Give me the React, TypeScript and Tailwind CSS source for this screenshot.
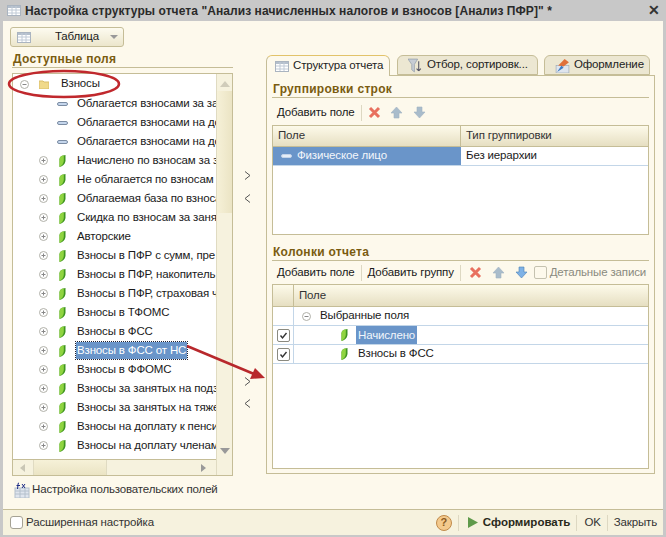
import type { ReactNode } from "react";

const FIELDS: [string, "dash" | "leaf"][] = [
  ["Облагается взносами за за", "dash"],
  ["Облагается взносами на до", "dash"],
  ["Облагается взносами на до", "dash"],
  ["Начислено по взносам за з", "leaf"],
  ["Не облагается по взносам", "leaf"],
  ["Облагаемая база по взносам", "leaf"],
  ["Скидка по взносам за заня", "leaf"],
  ["Авторские", "leaf"],
  ["Взносы в ПФР с сумм, пре", "leaf"],
  ["Взносы в ПФР, накопитель", "leaf"],
  ["Взносы в ПФР, страховая ч", "leaf"],
  ["Взносы в ТФОМС", "leaf"],
  ["Взносы в ФСС", "leaf"],
  ["Взносы в ФСС от НС", "leaf"],
  ["Взносы в ФФОМС", "leaf"],
  ["Взносы за занятых на подз", "leaf"],
  ["Взносы за занятых на тяже", "leaf"],
  ["Взносы на доплату к пенси", "leaf"],
  ["Взносы на доплату членам", "leaf"],
  ["Взносы в ПФР", "leaf"],
];

function Leaf() {
  return (
    <svg width="7" height="12" viewBox="0 0 8 14" className="shrink-0">
      <path d="M3.5 1L7.5 0V7C7 11 4 13 0.5 14V5C0.5 3 2 1.5 3.5 1Z" fill="#3f9420" />
      <path d="M3.5 1L5.5 0.5V7C5 10.5 3 12.5 0.5 14V5C0.5 3 2 1.5 3.5 1Z" fill="#8fd440" />
    </svg>
  );
}

function Dash({ light }: { light?: boolean }) {
  return <span className={`h-[4px] w-[11px] shrink-0 rounded-sm border ${light ? "border-[#c4d4ea] bg-[#e6eef8]" : "border-[#7b8ca3] bg-[#c5d6ec]"}`} />;
}

function Circle({ minus }: { minus?: boolean }) {
  return (
    <svg width="9" height="9" viewBox="0 0 9 9" className="shrink-0">
      <circle cx="4.5" cy="4.5" r="4" fill="#fff" stroke="#b0b0a8" />
      <path d={minus ? "M2.5 4.5H6.5" : "M2.5 4.5H6.5M4.5 2.5V6.5"} stroke="#888" />
    </svg>
  );
}

function Cross() {
  return (
    <svg width="13" height="13" viewBox="0 0 13 13" className="shrink-0">
      <path d="M2 2L11 11M11 2L2 11" stroke="#e8705f" strokeWidth="3" />
    </svg>
  );
}

function UpDown({ down, active }: { down?: boolean; active?: boolean }) {
  return (
    <svg width="13" height="13" viewBox="0 0 13 13" className="shrink-0">
      <path
        d={down ? "M4 1H9V6H12L6.5 12L1 6H4Z" : "M4 12H9V7H12L6.5 1L1 7H4Z"}
        fill={active ? "#7fb2e6" : "#a9bccb"}
        stroke={active ? "#4c7fb5" : "#a3b4c2"}
        strokeWidth="0.6"
      />
    </svg>
  );
}

function TableIcon() {
  return (
    <svg width="14" height="11" viewBox="0 0 14 11" className="shrink-0">
      <rect x="0.5" y="0.5" width="13" height="10" fill="#fff" stroke="#aab4c0" />
      <rect x="1" y="1" width="12" height="2" fill="#b4bfcc" />
      <path d="M5 1V10M9 1V10M1 5H13M1 8H13" stroke="#c0cad6" />
    </svg>
  );
}

function SectionTitle({ children }: { children: ReactNode }) {
  return <div className="border-b border-[#c5bd97] pl-px text-[12px] leading-[15px] font-bold tracking-[0.3px] text-[#7a5c10]">{children}</div>;
}

function Sep() {
  return <span className="block h-[16px] w-px bg-[#ddd8c2]" />;
}

function Check() {
  return (
    <span className="flex h-[13px] w-[13px] items-center justify-center rounded-[2px] border border-[#8a8a80] bg-white">
      <svg width="9" height="9" viewBox="0 0 9 9">
        <path d="M1.5 4.5L3.5 7L7.5 2" fill="none" stroke="#333" strokeWidth="1.4" />
      </svg>
    </span>
  );
}

function Tab({ label, active, icon, width }: { label: string; active?: boolean; icon: ReactNode; width: string }) {
  return (
    <div className={`flex items-center gap-[4px] rounded-t-md border border-[#c5bd97] ${width} ${active ? "relative z-10 h-[21px] border-b-0 border-t-[#e2c36a] bg-[#fdf9ec]" : "h-[20px] bg-[#ece7d2]"}`}>
      {icon}
      <span className="whitespace-nowrap text-[#222]">{label}</span>
    </div>
  );
}

function HeaderCell({ children, className }: { children?: ReactNode; className?: string }) {
  return <div className={`flex items-center border-b border-[#c5bd97] bg-gradient-to-b from-[#fdfaea] to-[#e6dfc2] px-[5px] text-[#333] ${className ?? "h-[21px]"}`}>{children}</div>;
}

export default function App() {
  return (
    <div className="relative h-[537px] w-[666px] overflow-hidden bg-[#c8c8c8] font-['Liberation_Sans',sans-serif] text-[11.5px] tracking-[-0.15px] text-[#1a1a1a]">
      {/* заголовок */}
      <div className="flex h-[21px] items-center pr-[6px] pl-[7px]">
        <TableIcon />
        <span className="ml-[4px] text-[12px] font-bold tracking-[0.08px] whitespace-nowrap text-[#2a2a2a]">
          Настройка структуры отчета "Анализ начисленных налогов и взносов [Анализ ПФР]" *
        </span>
        <span className="ml-auto text-[14px] font-bold text-[#333]">✕</span>
      </div>

      <div className="mx-[3px] flex h-[514px] flex-col bg-[#fdf9ec]">
        <div className="flex flex-1">
          {/* левая колонка */}
          <div className="flex w-[230px] shrink-0 flex-col pt-[6px] pl-[9px]">
            <div className="-ml-[2px] flex h-[20px] w-[114px] items-center rounded-[3px] border border-[#c5bd97] bg-gradient-to-b from-[#fdfbf0] to-[#ece6cc] pl-[6px]">
              <TableIcon />
              <span className="ml-[24px]">Таблица</span>
              <span className="mr-[5px] ml-auto h-0 w-0 border-x-[4px] border-t-[4px] border-x-transparent border-t-[#999]" />
            </div>
            <div className="mt-[5px]">
              <SectionTitle>Доступные поля</SectionTitle>
            </div>
            <div className="mt-[5px] flex h-[403px] border border-[#c5bd97] bg-white">
              <div className="flex min-w-0 flex-1 flex-col">
                <div className="h-[386px] overflow-hidden">
                  <div className="flex h-[20px] items-center pl-[7px]">
                    <Circle minus />
                    <svg width="10" height="9" viewBox="0 0 10 9" className="ml-[10px] shrink-0">
                      <path d="M0 1H4L5 2H10V9H0Z" fill="#f0d98a" stroke="#d9be6a" />
                    </svg>
                    <span className="ml-[12px]">Взносы</span>
                  </div>
                  {FIELDS.map(([name, kind], i) => (
                    <div key={i} className="flex h-[19px] items-center">
                      <span className="flex w-[35px] shrink-0 justify-end">{kind === "leaf" ? <Circle /> : null}</span>
                      <span className="flex w-[28px] shrink-0 justify-center">{kind === "leaf" ? <Leaf /> : <Dash />}</span>
                      <span className={`px-[1px] leading-[17px] whitespace-nowrap ${name === "Взносы в ФСС от НС" ? "bg-[#6a95c9] text-white outline-1 outline-[#223] outline-dotted" : ""}`}>{name}</span>
                    </div>
                  ))}
                </div>
                {/* горизонтальная прокрутка */}
                <div className="flex h-[16px] items-center border-t border-[#c5bd97] bg-[#f6f2de]">
                  <span className="ml-[7px] h-0 w-0 border-y-[4px] border-r-[5px] border-y-transparent border-r-[#c9c6b5]" />
                  <span className="ml-[8px] h-full w-[74px] border-x border-[#e0dbc2] bg-gradient-to-b from-[#f6f1d8] to-[#ebe4c4]" />
                  <span className="mr-[10px] ml-auto h-0 w-0 border-y-[4px] border-l-[5px] border-y-transparent border-l-[#999]" />
                </div>
              </div>
              {/* вертикальная прокрутка */}
              <div className="flex w-[16px] shrink-0 flex-col items-center border-l border-[#e0dbc2] bg-[#f6f2de]">
                <span className="mt-[7px] h-0 w-0 border-x-[5px] border-b-[6px] border-x-transparent border-b-[#d0ccba]" />
                <span className="mt-[4px] h-[122px] w-full bg-gradient-to-r from-[#f6f1d8] to-[#ebe4c4]" />
                <span className="mt-[235px] h-0 w-0 border-x-[5px] border-t-[6px] border-x-transparent border-t-[#999]" />
              </div>
            </div>
            <div className="mt-[5px] -ml-px flex items-center gap-[2px] pl-[3px]">
              <svg width="16" height="16" viewBox="0 0 16 16" className="shrink-0">
                <rect x="1" y="6" width="14" height="10" fill="#dfe5ee" stroke="#b4c0cc" />
                <path d="M1 9H15M1 12H15M6 6V16M11 6V16" stroke="#b4c0cc" />
                <path d="M5 1Q3.5 1 4 3L3.5 7M2.5 3.5H6M8 2L11 6M11 2L8 6" fill="none" stroke="#1b2a86" strokeWidth="1" />
              </svg>
              <span className="text-[#333]">Настройка пользовательских полей</span>
            </div>
          </div>

          {/* кнопки переноса */}
          <div className="flex w-[33px] shrink-0 flex-col items-center pt-[150px] pr-[4px]">
            <svg width="7" height="9" viewBox="0 0 7 9"><path d="M1 0.5L6 4.5L1 8.5" fill="none" stroke="#555" /></svg>
            <svg width="7" height="9" viewBox="0 0 7 9" className="mt-[14px]"><path d="M6 0.5L1 4.5L6 8.5" fill="none" stroke="#555" /></svg>
            <svg width="7" height="9" viewBox="0 0 7 9" className="mt-[174px]"><path d="M1 0.5L6 4.5L1 8.5" fill="none" stroke="#555" /></svg>
            <svg width="7" height="9" viewBox="0 0 7 9" className="mt-[13px]"><path d="M6 0.5L1 4.5L6 8.5" fill="none" stroke="#555" /></svg>
          </div>

          {/* правая колонка */}
          <div className="flex flex-1 flex-col pt-[34px] pr-[8px]">
            <div className="flex">
              <Tab active width="w-[124px] pl-[8px]" label="Структура отчета" icon={<TableIcon />} />
              <div className="w-[7px]" />
              <Tab
                width="w-[141px] pl-[10px]"
                label="Отбор, сортировк..."
                icon={
                  <svg width="15" height="15" viewBox="0 0 14 14" className="shrink-0">
                    <path d="M0 1H9L6 6V13L3.5 11V6Z" fill="#c6ccd4" stroke="#8a96a5" strokeWidth="0.6" />
                    <path d="M10 3V12M10 12L8 10M10 12L12 10" stroke="#556" fill="none" />
                  </svg>
                }
              />
              <div className="w-[6px]" />
              <Tab
                width="w-[106px] pl-[10px]"
                label="Оформление"
                icon={
                  <svg width="15" height="15" viewBox="0 0 14 14" className="shrink-0">
                    <rect x="1" y="7" width="12" height="7" fill="#dfe5ee" stroke="#9aa7b5" strokeWidth="0.6" />
                    <path d="M3 7L9 1L13 4L8 8Z" fill="#e0703a" />
                    <path d="M2 13L6 7L8 9Z" fill="#3d7cc4" />
                  </svg>
                }
              />
            </div>
            <div className="-mt-px flex h-[399px] flex-col border border-[#c5bd97] px-[5px] pt-[6px]">
              <SectionTitle>Группировки строк</SectionTitle>
              <div className="flex h-[27px] items-center pt-[2px] pl-[5px] whitespace-nowrap">
                <span>Добавить поле</span>
                <span className="mx-[6px]"><Sep /></span>
                <Cross />
                <span className="ml-[9px]"><UpDown /></span>
                <span className="ml-[10px]"><UpDown down /></span>
              </div>
              <div className="h-[110px] shrink-0 border border-[#c5bd97] bg-white">
                <div className="grid grid-cols-[188px_1fr]">
                  <HeaderCell className="h-[21px] border-r">Поле</HeaderCell>
                  <HeaderCell>Тип группировки</HeaderCell>
                  <div className="flex h-[19px] items-center gap-[5px] border-b border-[#c3d6e8] bg-[#6a95c9] pl-[8px] text-[#f2f6fb]">
                    <Dash light />
                    <span>Физическое лицо</span>
                  </div>
                  <div className="flex h-[19px] items-center border-b border-[#c3d6e8] px-[5px]">Без иерархии</div>
                </div>
              </div>
              <div className="mt-[10px]">
                <SectionTitle>Колонки отчета</SectionTitle>
              </div>
              <div className="flex h-[23px] items-center pl-[5px] whitespace-nowrap">
                <span>Добавить поле</span>
                <span className="mx-[6px]"><Sep /></span>
                <span>Добавить группу</span>
                <span className="mx-[6px]"><Sep /></span>
                <span className="ml-[2px]"><Cross /></span>
                <span className="ml-[10px]"><UpDown /></span>
                <span className="ml-[10px]"><UpDown down active /></span>
                <span className="ml-[6px] h-[13px] w-[13px] rounded-[2px] border border-[#c5c2b0]" />
                <span className="ml-[3px] text-[#8a8a80]">Детальные записи</span>
              </div>
              <div className="h-[185px] shrink-0 border border-[#c5bd97] bg-white">
                <div className="grid grid-cols-[21px_1fr]">
                  <HeaderCell className="h-[22px] border-r" />
                  <HeaderCell className="h-[22px]">Поле</HeaderCell>
                  <div className="h-[19px] border-r border-b border-[#c3d6e8]" />
                  <div className="flex h-[19px] items-center border-b border-[#c3d6e8] pl-[8px]">
                    <Circle minus />
                    <span className="ml-[9px]">Выбранные поля</span>
                  </div>
                  <div className="flex h-[19px] items-center justify-center border-r border-b border-[#c3d6e8]"><Check /></div>
                  <div className="flex h-[19px] items-center border-b border-[#c3d6e8] pl-[47px]">
                    <Leaf />
                    <span className="ml-[8px] bg-[#6a95c9] px-[2px] leading-[18px] text-[#f2f6fb]">Начислено</span>
                  </div>
                  <div className="flex h-[19px] items-center justify-center border-r border-b border-[#c3d6e8]"><Check /></div>
                  <div className="flex h-[19px] items-center border-b border-[#c3d6e8] pl-[47px]">
                    <Leaf />
                    <span className="ml-[10px]">Взносы в ФСС</span>
                  </div>
                </div>
              </div>
            </div>
          </div>
        </div>

        {/* нижняя панель */}
        <div className="flex h-[26px] shrink-0 items-center border-t border-[#c5bd97] bg-[#f6f2de] pr-[6px] pl-[7px]">
          <span className="h-[13px] w-[13px] rounded-[3px] border border-[#a5a294] bg-white" />
          <span className="ml-[3px] text-[#333]">Расширенная настройка</span>
          <span className="ml-auto flex h-[16px] w-[16px] items-center justify-center rounded-full border border-[#c08a4a] bg-[#f3c98c] text-[11px] font-bold text-[#8a5a20]">?</span>
          <span className="mx-[6px]"><Sep /></span>
          <svg width="10" height="11" viewBox="0 0 10 11" className="ml-[3px]"><path d="M0 0L10 5.5L0 11Z" fill="#5f9a4a" /></svg>
          <span className="ml-[5px] font-bold tracking-[0px] text-[#2a2a1a]">Сформировать</span>
          <span className="mr-[4px] ml-[6px]"><Sep /></span>
          <span className="ml-[3px] text-[#333]">OK</span>
          <span className="mx-[6px]"><Sep /></span>
          <span className="text-[#333]">Закрыть</span>
        </div>
      </div>

      {/* пометки поверх окна */}
      <svg width="666" height="537" viewBox="0 0 666 537" className="pointer-events-none absolute top-0 left-0">
        <ellipse cx="64" cy="84" rx="55" ry="13" fill="none" stroke="#c0282d" strokeWidth="2.5" />
        <path d="M187 346L254 374" stroke="#b8282c" strokeWidth="2.5" />
        <path d="M265 378L250 379L255 368Z" fill="#b8282c" />
      </svg>
    </div>
  );
}
